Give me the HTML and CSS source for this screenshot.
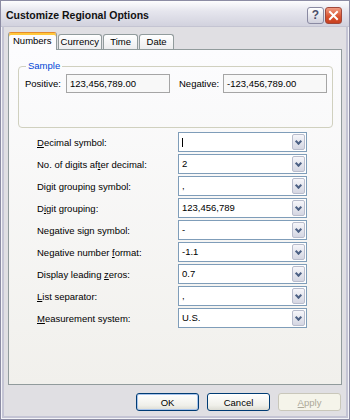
FILE: index.html
```html
<!DOCTYPE html>
<html>
<head>
    <title>Customize Regional Options</title>
    <link rel="stylesheet" href="styles.css">
</head>
<body>
    <div class="window">
        <div class="titlebar">
            <span class="title">Customize Regional Options</span>
            <div class="caption-buttons">
                <span class="cap-btn help">?</span>
                <span class="cap-btn close">
                    <svg width="11" height="11" viewBox="0 0 11 11">
                        <path d="M2 2 L9 9 M9 2 L2 9" stroke="#fff" stroke-width="2" stroke-linecap="square"/>
                    </svg>
                </span>
            </div>
        </div>

        <div class="client">
            <!-- tabs -->
            <div class="tabs">
                <div class="tab active">Numbers</div>
                <div class="tab">Currency</div>
                <div class="tab">Time</div>
                <div class="tab">Date</div>
            </div>

            <div class="panel">
                <fieldset class="group">
                    <legend>Sample</legend>
                    <div class="sample-row">
                        <label>Positive:</label>
                        <div class="edit">123,456,789.00</div>
                        <label class="neg-label">Negative:</label>
                        <div class="edit">-123,456,789.00</div>
                    </div>
                </fieldset>

                <div class="options">
                    <label><u>D</u>ecimal symbol:</label>
                    <div class="combo"><span class="combo-text"><span class="caret"></span></span><span class="arrow"></span></div>

                    <label>No. of digits af<u>t</u>er decimal:</label>
                    <div class="combo"><span class="combo-text">2</span><span class="arrow"></span></div>

                    <label>Digit grouping symbol:</label>
                    <div class="combo"><span class="combo-text">,</span><span class="arrow"></span></div>

                    <label>D<u>i</u>git grouping:</label>
                    <div class="combo"><span class="combo-text">123,456,789</span><span class="arrow"></span></div>

                    <label>Ne<u>g</u>ative sign symbol:</label>
                    <div class="combo"><span class="combo-text">-</span><span class="arrow"></span></div>

                    <label>Negative number <u>f</u>ormat:</label>
                    <div class="combo"><span class="combo-text">-1.1</span><span class="arrow"></span></div>

                    <label>Display leading <u>z</u>eros:</label>
                    <div class="combo"><span class="combo-text">0.7</span><span class="arrow"></span></div>

                    <label><u>L</u>ist separator:</label>
                    <div class="combo"><span class="combo-text">,</span><span class="arrow"></span></div>

                    <label><u>M</u>easurement system:</label>
                    <div class="combo"><span class="combo-text">U.S.</span><span class="arrow"></span></div>
                </div>
            </div>

            <div class="buttons">
                <button class="btn default">OK</button>
                <button class="btn">Cancel</button>
                <button class="btn" disabled><u>A</u>pply</button>
            </div>
        </div>
    </div>
</body>
</html>
```

FILE: styles.css
```css
body {
    margin: 0;
    font-family: "Liberation Sans", Arial, sans-serif;
    font-size: 9.5px;
    color: #000;
}
.window {
    width: 350px;
    height: 420px;
    box-sizing: border-box;
    border: 1px solid #8c8ca4;
    background-color: #e0dfe3;
    box-shadow: inset 0 0 0 1px #f4f4f8, inset 0 0 0 3px #c4c4d4;
}
.titlebar {
    height: 26px;
    display: flex;
    align-items: center;
    justify-content: space-between;
    padding: 0 7px 0 5px;
    background: linear-gradient(to bottom, #fdfdfe 0%, #e6e6ee 40%, #d2d2de 100%);
    border-bottom: 1px solid #c4c4d2;
    box-sizing: border-box;
}
.title {
    font-weight: bold;
    font-size: 10.5px;
    color: #111;
    padding-top: 2px;
}
.caption-buttons {
    display: flex;
    gap: 1px;
    margin-top: 3px;
}
.cap-btn {
    width: 17px;
    height: 17px;
    box-sizing: border-box;
    border-radius: 3px;
    display: flex;
    align-items: center;
    justify-content: center;
}
.help {
    border: 1px solid #8a8aa2;
    background: linear-gradient(to bottom, #ffffff, #d0d0dc);
    color: #4a4f6a;
    font-weight: bold;
    font-size: 12px;
}
.close {
    border: 1px solid #a0483a;
    background: linear-gradient(to bottom, #f09a80, #d8502c 60%, #c84020);
}
.client {
    padding: 5px 7px 0 7px;
}
.tabs {
    display: flex;
    align-items: flex-end;
    height: 17px;
    gap: 1px;
}
.tab {
    height: 15px;
    min-width: 35px;
    box-sizing: border-box;
    padding: 0 2px;
    text-align: center;
    line-height: 14px;
    border: 1px solid #919b9c;
    border-bottom: none;
    border-radius: 3px 3px 0 0;
    background: linear-gradient(to bottom, #ffffff, #ececee);
}
.tab.active {
    height: 18px;
    margin-bottom: -1px;
    padding: 0 4px;
    line-height: 15px;
    position: relative;
    z-index: 1;
    border-top: 1px solid #e68b2c;
    box-shadow: inset 0 2px 0 #ffc83c;
    background: #fcfcfe;
}
.panel {
    height: 336px;
    box-sizing: border-box;
    border: 1px solid #919b9c;
    background: linear-gradient(to bottom, #fcfcfe, #f1f0ec);
    padding: 10px 8px 0 9px;
}
.group {
    margin: 0;
    padding: 2px 6px 0 6px;
    height: 68px;
    box-sizing: border-box;
    border: 1px solid #d0d0bf;
    border-radius: 4px;
    min-width: 0;
}
.group legend {
    color: #0046d5;
    padding: 0 2px;
    margin-left: 1px;
    line-height: 12px;
}
.sample-row {
    display: grid;
    grid-template-columns: 41px 104px 53px 104px;
    align-items: center;
}
.neg-label {
    margin-left: 9px;
}
.edit {
    height: 19px;
    box-sizing: border-box;
    border: 1px solid #a5a5a5;
    background-color: #f8f8f8;
    padding-left: 3px;
    line-height: 17px;
}
.options {
    display: grid;
    grid-template-columns: 141px 129px;
    grid-auto-rows: 20px;
    row-gap: 2px;
    align-items: center;
    margin: 4px 0 0 19px;
}
.combo {
    height: 20px;
    box-sizing: border-box;
    border: 1px solid #7f9db9;
    background-color: #fff;
    display: flex;
}
.combo-text {
    flex: 1;
    padding-left: 3px;
    line-height: 18px;
    display: flex;
    align-items: center;
}
.caret {
    width: 1px;
    height: 9px;
    background-color: #000;
}
.arrow {
    width: 13px;
    margin: 1px;
    box-sizing: border-box;
    border: 1px solid #b8bccc;
    border-radius: 2px;
    background: linear-gradient(to bottom, #f6f6fa, #d4d6e2);
    position: relative;
}
.arrow::after {
    content: "";
    position: absolute;
    left: 3px;
    top: 4px;
    width: 3px;
    height: 3px;
    border-right: 2px solid #4d6185;
    border-bottom: 2px solid #4d6185;
    transform: rotate(45deg);
}
.buttons {
    display: flex;
    justify-content: flex-end;
    gap: 8px;
    margin-top: 8px;
    padding-right: 1px;
}
.btn {
    width: 63px;
    height: 18px;
    box-sizing: border-box;
    border: 1px solid #003c74;
    border-radius: 3px;
    background: linear-gradient(to bottom, #ffffff, #f0f0ea 70%, #dcdcd4);
    font-family: "Liberation Sans", Arial, sans-serif;
    font-size: 9.5px;
    color: #000;
    padding: 0;
}
.btn.default {
    box-shadow: inset 0 0 0 1px #a8c4ec;
}
.btn:disabled {
    border-color: #c9c7ba;
    background: #f5f4ea;
    color: #aca899;
}
```
